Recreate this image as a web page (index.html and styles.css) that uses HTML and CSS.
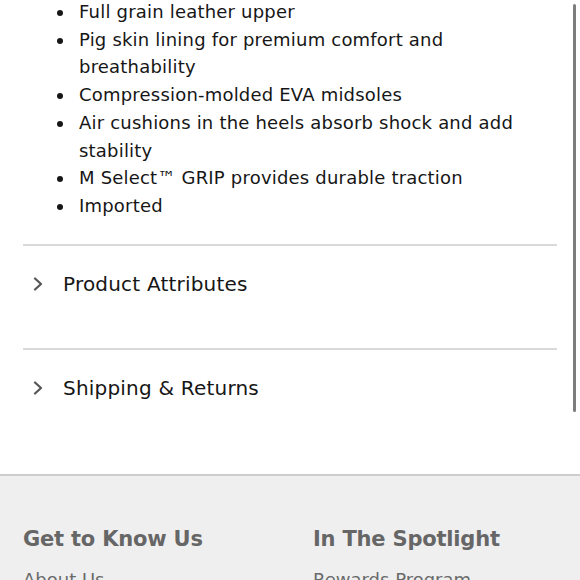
FILE: index.html
```html
<!DOCTYPE html>
<html lang="en">
<head>
<meta charset="utf-8">
<title>Product details</title>
<link rel="stylesheet" href="styles.css">
</head>
<body>
<main class="details">
  <ul class="features">
    <li>Full grain leather upper</li>
    <li>Pig skin lining for premium comfort and breathability</li>
    <li>Compression-molded EVA midsoles</li>
    <li>Air cushions in the heels absorb shock and add stability</li>
    <li>M Select™ GRIP provides durable traction</li>
    <li>Imported</li>
  </ul>

  <section class="accordion">
    <div class="acc-head">
      <svg class="chev" viewBox="0 0 10 14" width="10" height="14" aria-hidden="true"><path d="M2 1.5 L8 7 L2 12.5"/></svg>
      <span>Product Attributes</span>
    </div>
  </section>
  <section class="accordion last">
    <div class="acc-head">
      <svg class="chev" viewBox="0 0 10 14" width="10" height="14" aria-hidden="true"><path d="M2 1.5 L8 7 L2 12.5"/></svg>
      <span>Shipping &amp; Returns</span>
    </div>
  </section>
</main>

<footer class="footer">
  <div class="footer-col">
    <h3 class="footer-title">Get to Know Us</h3>
    <ul class="footer-links">
      <li>About Us</li>
    </ul>
  </div>
  <div class="footer-col">
    <h3 class="footer-title">In The Spotlight</h3>
    <ul class="footer-links">
      <li>Rewards Program</li>
    </ul>
  </div>
</footer>

<div class="scroll-thumb"></div>
</body>
</html>
```
FILE: styles.css
```css
html, body {
  overflow: hidden;
}
body {
  margin: 0;
  font-family: "DejaVu Sans", sans-serif;
  color: #161616;
  background: #fff;
}
.details {
  padding: 0 23px;
}
.features {
  list-style: none;
  margin: -2px 0 0;
  padding: 0 0 0 34px;
  font-size: 18px;
  line-height: 27.7px;
  letter-spacing: 0.2px;
}
.features li {
  display: flex;
  gap: 16px;
}
.features li::before {
  content: "";
  flex: 0 0 6px;
  width: 6px;
  height: 6px;
  margin-top: 12px;
  border-radius: 50%;
  background: #161616;
}
.accordion {
  border-top: 2px solid #dadada;
  padding: 24px 0 50px;
}
.accordion:first-of-type {
  margin-top: 24px;
}
.accordion.last {
  padding-bottom: 72px;
}
.acc-head {
  display: flex;
  align-items: center;
  gap: 20px;
  padding-left: 10px;
  font-size: 20px;
  line-height: 28px;
  letter-spacing: 0.2px;
}
.chev {
  flex: none;
  fill: none;
  stroke: #555;
  stroke-width: 2.2;
  stroke-linecap: round;
  stroke-linejoin: round;
}
.footer {
  border-top: 2px solid #cdcdcd;
  background: #efefef;
  padding: 49px 23px 40px;
  display: grid;
  grid-template-columns: 1fr 1fr;
  column-gap: 46px;
  color: #666;
}
.footer-title {
  margin: 0 0 13px;
  font-size: 21px;
  line-height: 28px;
  font-weight: bold;
  letter-spacing: -0.2px;
  color: #666;
}
.footer-links {
  list-style: none;
  margin: 0;
  padding: 0;
  font-size: 18px;
  line-height: 28px;
  color: #6a6a6a;
}
.scroll-thumb {
  position: fixed;
  top: 4px;
  right: 4px;
  width: 3px;
  height: 408px;
  border-radius: 2px;
  background: #7d7d7d;
}
```
